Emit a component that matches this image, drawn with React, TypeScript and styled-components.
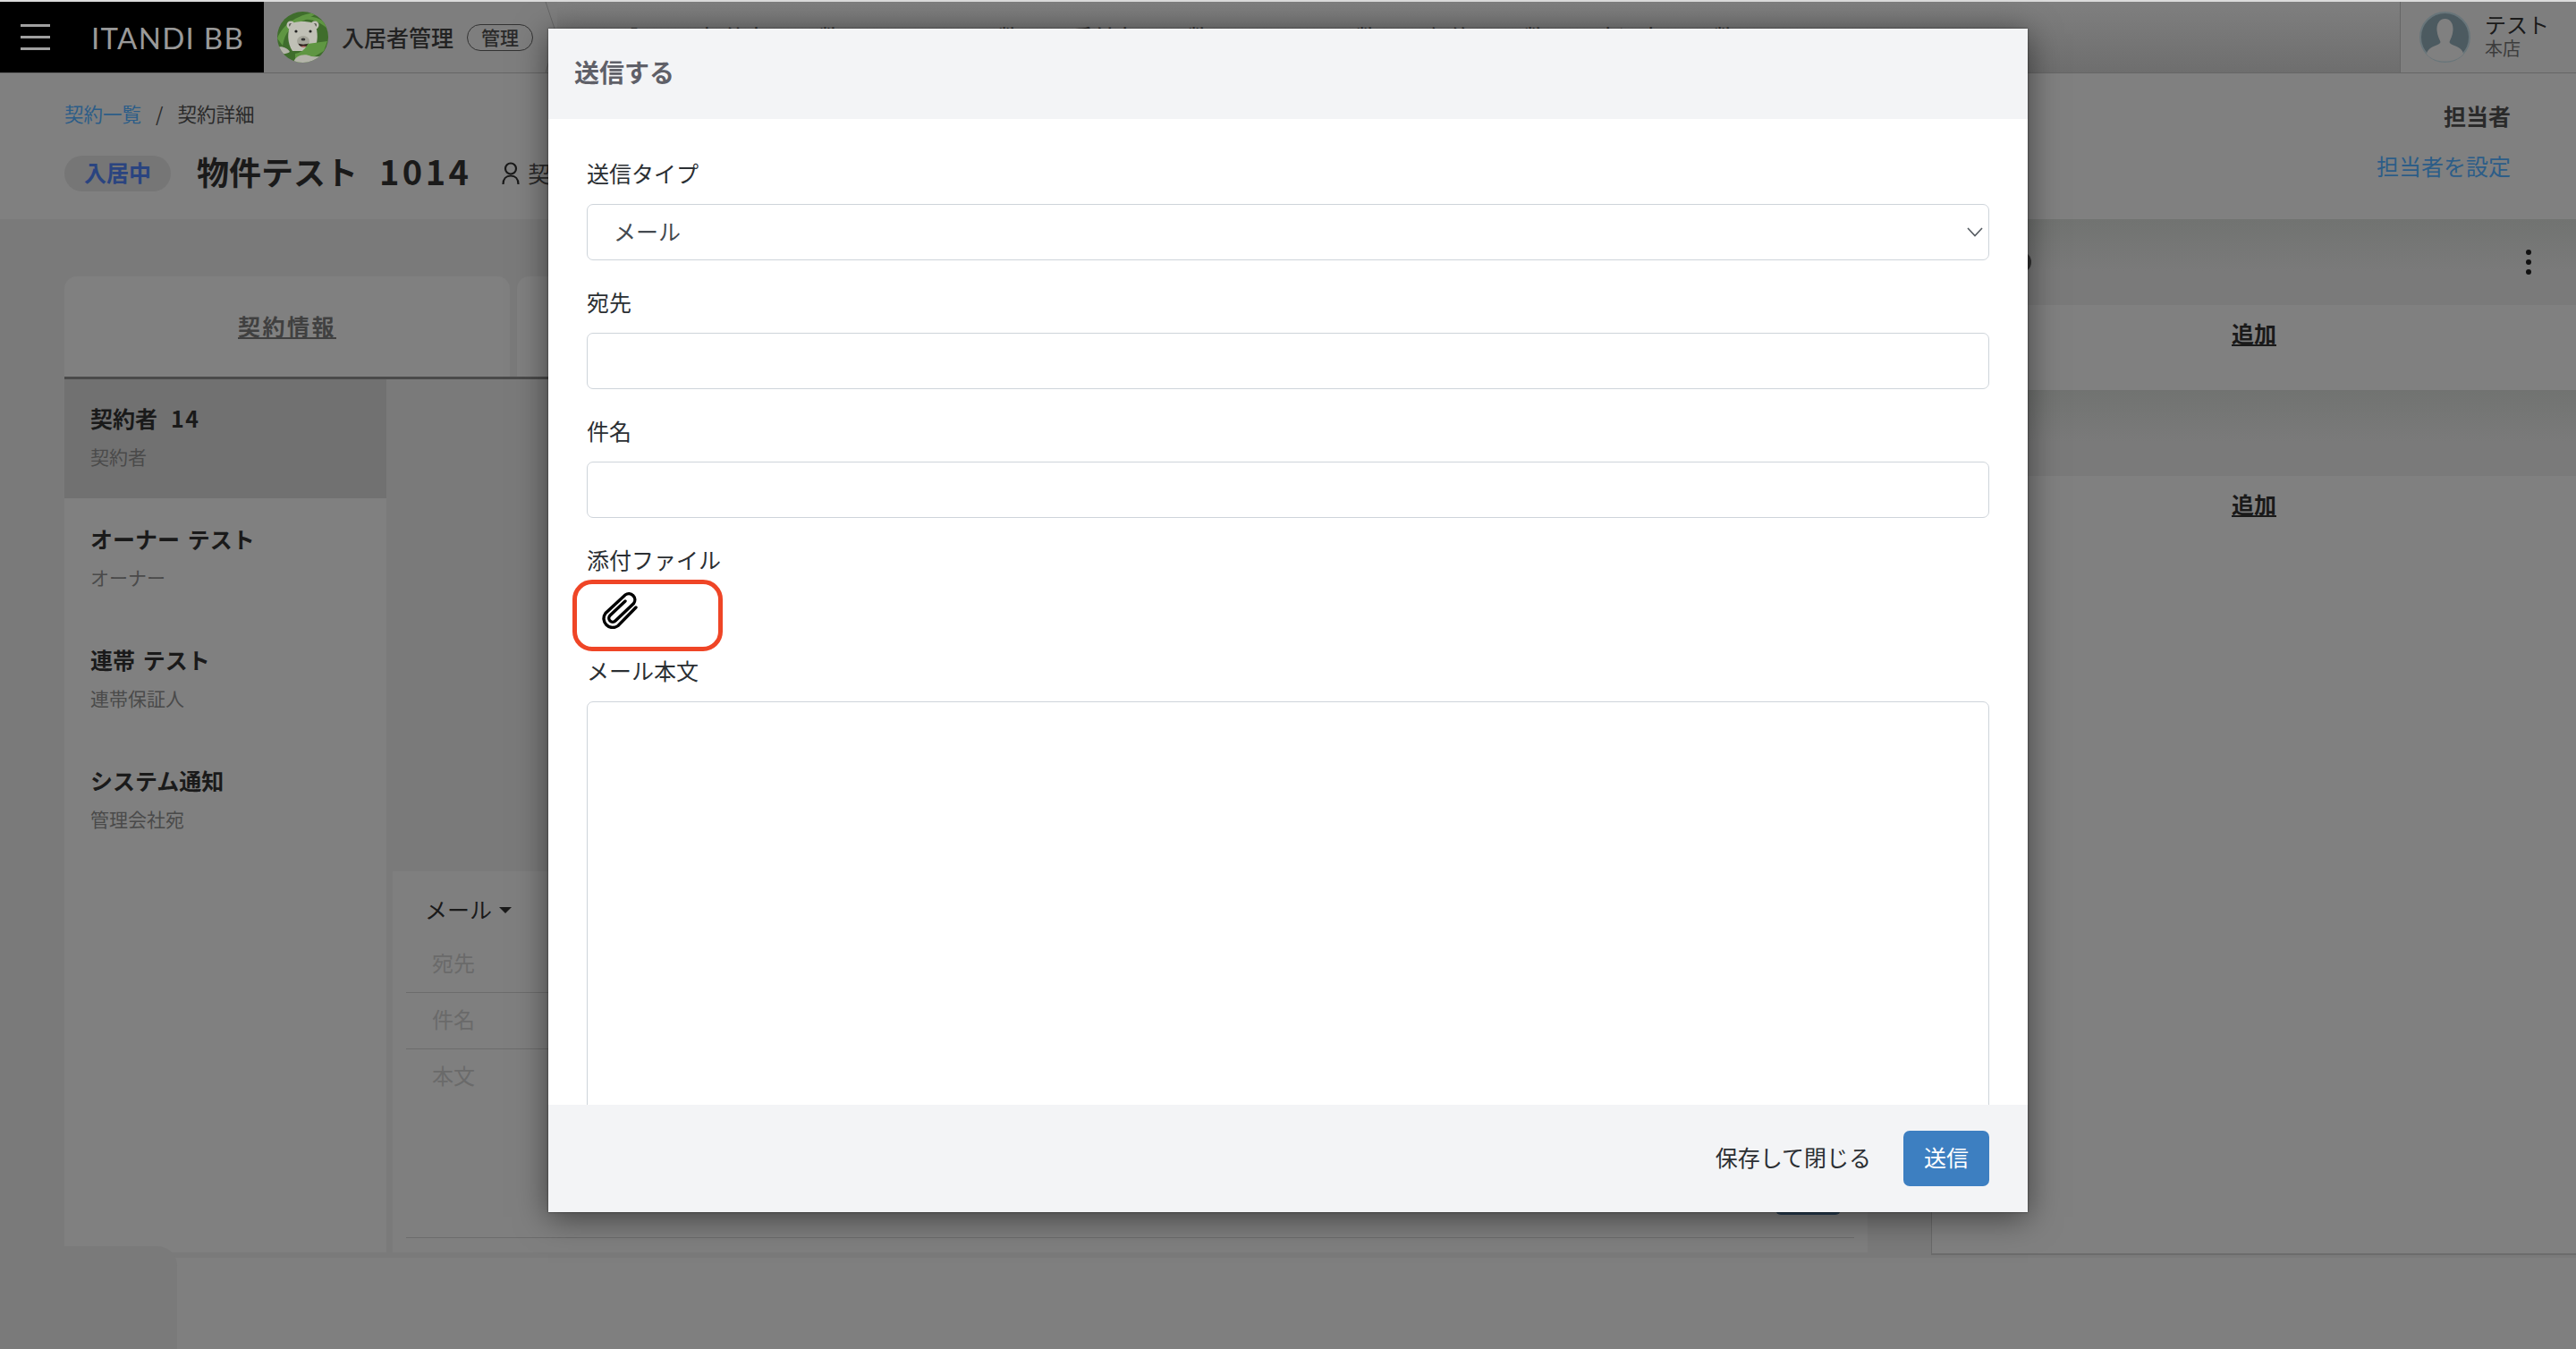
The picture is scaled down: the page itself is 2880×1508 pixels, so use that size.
import React from "react";
import styled, { createGlobalStyle } from "styled-components";

const GlobalStyle = createGlobalStyle`
    html, body {
        margin: 0;
        padding: 0;
        background: #808080;
    }
    * {
        box-sizing: border-box;
    }
    body {
        font-family: "Noto Sans CJK JP", "Noto Sans", sans-serif;
        color: #1a1a1a;
    }
`;

const BearLogo = () => (
    <svg width="57" height="57" viewBox="0 0 57 57">
        <defs>
            <clipPath id="bear-clip">
                <circle cx="28.5" cy="28.5" r="28.5" />
            </clipPath>
        </defs>
        <g clipPath="url(#bear-clip)">
            <rect width="57" height="57" fill="#3f6d2c" />
            <path d="M0 30 C6 14 24 2 48 0 L30 10 C16 14 8 24 6 38 Z" fill="#5f9642" />
            <path d="M30 6 C40 4 50 8 57 16 L57 20 C48 12 40 8 30 9 Z" fill="#5f9642" />
            <circle cx="15" cy="15" r="4.5" fill="#c0c0b6" />
            <circle cx="42" cy="15" r="4.5" fill="#c0c0b6" />
            <circle cx="15" cy="15" r="2" fill="#55554e" />
            <circle cx="42" cy="15" r="2" fill="#55554e" />
            <path d="M15 14 C20 10 37 10 42 14 C46 22 46 36 40 44 L17 44 C11 36 11 22 15 14 Z" fill="#c0c0b6" />
            <circle cx="21" cy="22" r="1.6" fill="#222" />
            <circle cx="37" cy="22" r="1.6" fill="#222" />
            <ellipse cx="29" cy="33" rx="7" ry="6" fill="#a5a59a" />
            <ellipse cx="29" cy="31" rx="2.4" ry="1.6" fill="#333" />
            <path d="M23.5 35.5 C26 37 32 37 35 35.5 C34.5 41 24.5 41 23.5 35.5 Z" fill="#2a1d1a" />
            <path d="M26 39 C28 38 31 38 33 39 C31 40.5 28 40.5 26 39 Z" fill="#b5766c" />
            <path d="M34 36 L56 33 L52 44 L30 57 L20 57 L20 47 C26 46 32 42 34 36 Z" fill="#5f9642" />
            <path d="M0 40 C5 38 12 41 14 45 C10 48 5 47 2 48 Z" fill="#b4b4aa" />
            <path d="M18 57 C20 49 30 46 38 50 C42 50 46 51 50 49 L46 57 Z" fill="#b4b4aa" />
        </g>
    </svg>
);

const UserAvatar = () => (
    <svg width="57" height="57" viewBox="0 0 57 57">
        <circle cx="28.5" cy="28.5" r="27.5" fill="#4c5a60" stroke="#68757a" strokeWidth="2" />
        <path
            d="M28.5 8 C35 8 38 14 37.5 21 C37 27 34.5 31 33.5 34 C34 37 41 38 45 41 C48 43 49 46 49 47.5 C44 53 37 55.5 28.5 55.5 C20 55.5 13 53 8 47.5 C8 46 9 43 12 41 C16 38 23 37 23.5 34 C22.5 31 20 27 19.5 21 C19 14 22 8 28.5 8 Z"
            fill="#808080"
        />
    </svg>
);

const PersonIcon = () => (
    <svg width="20" height="26" viewBox="0 0 20 26" fill="none" stroke="#1a1a1a" strokeWidth="2.2">
        <circle cx="10" cy="7.5" r="6" />
        <path d="M1.5 25 C1.5 19 5 15.5 10 15.5 C15 15.5 18.5 19 18.5 25" />
    </svg>
);

const PaperClip = () => (
    <svg width="40" height="42" viewBox="0 0 40 42" fill="none" stroke="#000" strokeWidth="3.4" strokeLinecap="round">
        <path d="M38 18 L18 38.5 A10 10 0 0 1 4 24.5 L26 4 A6.8 6.8 0 0 1 35.5 13.5 L15 33 A4.2 4.2 0 0 1 9 27 L26 11" />
    </svg>
);

const SelectChevron = () => (
    <svg width="18" height="11" viewBox="0 0 18 11" fill="none" stroke="#555b61" strokeWidth="1.6">
        <polyline points="1,1 9,9.5 17,1" />
    </svg>
);

const MENU_ITEMS = ["MSA証", "招待中", "数", "FOSS", "数", "受付中", "数", "入居", "数", "解約", "数", "申込中", "数"];

const CUSTOMERS = [
    { name: "契約者", no: "14", role: "契約者", selected: true },
    { name: "オーナー テスト", role: "オーナー", selected: false },
    { name: "連帯 テスト", role: "連帯保証人", selected: false },
    { name: "システム通知", role: "管理会社宛", selected: false },
];

export default function App() {
    return (
        <Page>
            <GlobalStyle />
            <TopStrip />
            <GlobalHeader>
                <Brand>
                    <Hamburger>
                        <span />
                        <span />
                        <span />
                    </Hamburger>
                    <BrandName>ITANDI BB</BrandName>
                </Brand>
                <AppTitle>
                    <BearLogo />
                    <AppName>入居者管理</AppName>
                    <RoleBadge>管理</RoleBadge>
                </AppTitle>
                <Slant width="14" height="80" viewBox="0 0 14 80">
                    <polyline points="1,0 13,36 1,80" />
                </Slant>
                <HeaderNav>
                    {MENU_ITEMS.map((item, i) => (
                        <span key={i}>{item}</span>
                    ))}
                </HeaderNav>
                <UserBlock>
                    <UserAvatar />
                    <div>
                        <UserName>テスト</UserName>
                        <UserShop>本店</UserShop>
                    </div>
                </UserBlock>
            </GlobalHeader>

            <TitleBar>
                <div>
                    <Breadcrumb>
                        <a>契約一覧</a>
                        <i>/</i>
                        <span>契約詳細</span>
                    </Breadcrumb>
                    <TitleRow>
                        <StatusPill>入居中</StatusPill>
                        <PropertyName>
                            物件テスト<b>1014</b>
                        </PropertyName>
                        <ContractPerson>
                            <PersonIcon />
                            <span>契</span>
                        </ContractPerson>
                    </TitleRow>
                </div>
                <AssigneeBox>
                    <strong>担当者</strong>
                    <a>担当者を設定</a>
                </AssigneeBox>
            </TitleBar>

            <ContentRow>
                <Workspace>
                    <Tabs>
                        <Tab>契約情報</Tab>
                        <Tab />
                    </Tabs>
                    <Split>
                        <Sidebar>
                            {CUSTOMERS.map((c) => (
                                <CustomerItem key={c.name} selected={c.selected}>
                                    <CustomerName>
                                        {c.name}
                                        {c.no && <CustomerNo>{c.no}</CustomerNo>}
                                    </CustomerName>
                                    <CustomerRole>{c.role}</CustomerRole>
                                </CustomerItem>
                            ))}
                        </Sidebar>
                        <ThreadColumn>
                            <Composer>
                                <ComposerType>
                                    メール
                                    <Caret />
                                </ComposerType>
                                <ComposerRow>宛先</ComposerRow>
                                <ComposerRow>件名</ComposerRow>
                                <ComposerRow grow>本文</ComposerRow>
                                <ComposerSend />
                            </Composer>
                        </ThreadColumn>
                    </Split>
                </Workspace>
                <RightPanel>
                    <PanelHeader>
                        <PanelDot />
                        <MoreDots>
                            <span />
                            <span />
                            <span />
                        </MoreDots>
                    </PanelHeader>
                    <PanelRow>
                        <AddLink>追加</AddLink>
                    </PanelRow>
                    <PanelHeader />
                    <PanelRow>
                        <AddLink>追加</AddLink>
                    </PanelRow>
                </RightPanel>
            </ContentRow>
            <PageFoot>
                <FootTab />
            </PageFoot>

            <Modal>
                <ModalHeader>送信する</ModalHeader>
                <ModalBody>
                    <Field>
                        <FieldLabel>送信タイプ</FieldLabel>
                        <SelectBox>
                            <span>メール</span>
                            <SelectChevron />
                        </SelectBox>
                    </Field>
                    <Field>
                        <FieldLabel>宛先</FieldLabel>
                        <TextInput readOnly />
                    </Field>
                    <Field>
                        <FieldLabel>件名</FieldLabel>
                        <TextInput readOnly />
                    </Field>
                    <FieldLabel tight>添付ファイル</FieldLabel>
                    <AttachRow>
                        <PaperClip />
                        <Highlight />
                    </AttachRow>
                    <FieldLabel>メール本文</FieldLabel>
                    <BodyArea readOnly />
                </ModalBody>
                <ModalFooter>
                    <SaveClose>保存して閉じる</SaveClose>
                    <SendButton>送信</SendButton>
                </ModalFooter>
            </Modal>
        </Page>
    );
}

const Page = styled.div`
    position: relative;
    display: flex;
    flex-direction: column;
    width: 2880px;
    height: 1508px;
    overflow: hidden;
    background: #808080;
`;

const TopStrip = styled.div`
    flex: none;
    height: 2px;
    background: #dcdcdc;
`;

const GlobalHeader = styled.header`
    flex: none;
    display: flex;
    height: 80px;
    border-bottom: 1px solid #666;
    background: #7e7e7e;
`;

const Brand = styled.div`
    flex: none;
    display: flex;
    align-items: center;
    width: 295px;
    padding-left: 23px;
    background: #000;
`;

const Hamburger = styled.div`
    display: flex;
    flex-direction: column;
    gap: 10px;
    width: 33px;

    span {
        height: 3px;
        background: #a0a0a0;
    }
`;

const BrandName = styled.div`
    margin-left: 46px;
    font-family: "Lato", sans-serif;
    font-size: 33px;
    font-weight: 400;
    letter-spacing: 1.3px;
    white-space: nowrap;
    color: #999;
`;

const AppTitle = styled.div`
    flex: none;
    display: flex;
    align-items: center;
    padding-left: 15px;
`;

const AppName = styled.div`
    margin-left: 15px;
    padding-bottom: 2px;
    font-size: 25px;
    font-weight: 500;
    color: #222;
`;

const RoleBadge = styled.div`
    display: flex;
    align-items: center;
    justify-content: center;
    width: 74px;
    height: 30px;
    margin-left: 15px;
    padding-bottom: 2px;
    border: 1px solid #333;
    border-radius: 15px;
    font-size: 21px;
    font-weight: 500;
    color: #2a2a2a;
`;

const Slant = styled.svg`
    flex: none;
    margin-left: 13px;
    fill: none;
    stroke: #666;
    stroke-width: 1;
`;

const HeaderNav = styled.nav`
    flex: 1;
    display: flex;
    gap: 58px;
    padding: 21px 0 0 31px;
    font-size: 24px;
    line-height: 36px;
    font-weight: 500;
    white-space: nowrap;
    overflow: hidden;
    background: linear-gradient(#7f7f7f, #6e6e6e);
`;

const UserBlock = styled.div`
    flex: none;
    display: flex;
    align-items: center;
    gap: 16px;
    width: 197px;
    padding-left: 21px;
    border-left: 1px solid #666;
`;

const UserName = styled.div`
    margin-top: -5px;
    font-size: 24px;
    line-height: 30px;
    color: #1a1a1a;
`;

const UserShop = styled.div`
    font-size: 20px;
    line-height: 24px;
    color: #3c3c3c;
`;

const TitleBar = styled.section`
    flex: none;
    display: flex;
    justify-content: space-between;
    height: 163px;
    padding: 29px 73px 0 72px;
    background: #808080;
`;

const Breadcrumb = styled.div`
    display: flex;
    align-items: center;
    gap: 16px;
    height: 30px;
    font-size: 21.5px;
    color: #2a2a2a;

    a {
        color: #2c5d88;
    }
    i {
        font-style: normal;
    }
`;

const TitleRow = styled.div`
    display: flex;
    align-items: center;
    height: 40px;
    margin-top: 33px;
`;

const StatusPill = styled.div`
    display: flex;
    align-items: center;
    justify-content: center;
    width: 119px;
    height: 40px;
    padding-bottom: 4px;
    border-radius: 20px;
    background: #767676;
    font-size: 25px;
    font-weight: 700;
    color: #2a4480;
`;

const PropertyName = styled.h1`
    margin: -6px 0 0 29px;
    font-size: 36px;
    line-height: 48px;
    font-weight: 700;
    color: #1a1a1a;

    b {
        margin-left: 24px;
        font-size: 38px;
        font-weight: 700;
        letter-spacing: 3.4px;
    }
`;

const ContractPerson = styled.div`
    display: flex;
    align-items: center;
    gap: 9px;
    margin-left: 34px;
    font-size: 25px;
    color: #2a2a2a;
    white-space: nowrap;

    span {
        padding-bottom: 3px;
    }
`;

const AssigneeBox = styled.div`
    display: flex;
    flex-direction: column;
    align-items: flex-end;
    margin-top: -1px;
    font-size: 25px;
    line-height: 38px;

    strong {
        font-weight: 700;
        color: #2a2a2a;
    }
    a {
        margin-top: 18px;
        color: #2c5d88;
    }
`;

const ContentRow = styled.div`
    flex: none;
    display: flex;
    height: 1161px;
    background: #7a7a7a;
`;

const Workspace = styled.div`
    flex: none;
    display: flex;
    flex-direction: column;
    width: 2159px;
    padding: 64px 71px 6px 72px;
`;

const Tabs = styled.div`
    flex: none;
    display: flex;
    gap: 8px;
    border-bottom: 3px solid #4a4a4a;
`;

const Tab = styled.div`
    display: flex;
    align-items: center;
    justify-content: center;
    width: 498px;
    height: 112px;
    padding-bottom: 3px;
    border-radius: 14px 14px 0 0;
    background: #808080;
    font-size: 25px;
    font-weight: 700;
    letter-spacing: 2.5px;
    text-decoration: underline;
    color: #404040;
`;

const Split = styled.div`
    flex: 1;
    display: flex;
    gap: 7px;
    min-height: 0;
`;

const Sidebar = styled.aside`
    flex: none;
    display: flex;
    flex-direction: column;
    gap: 2px;
    width: 360px;
    background: #808080;
`;

const CustomerItem = styled.div<{ selected: boolean }>`
    height: 133px;
    padding: 25px 0 0 29px;
    background: ${(p) => (p.selected ? "#717171" : "transparent")};
`;

const CustomerName = styled.div`
    font-size: 25px;
    line-height: 36px;
    font-weight: 700;
    word-spacing: 3px;
    color: #1a1a1a;
`;

const CustomerNo = styled.span`
    margin-left: 15px;
    letter-spacing: 1.5px;
`;

const CustomerRole = styled.div`
    margin-top: 10px;
    font-size: 21px;
    line-height: 30px;
    color: #4a4a4a;
`;

const ThreadColumn = styled.div`
    flex: 1;
    display: flex;
    flex-direction: column;
    justify-content: flex-end;
`;

const Composer = styled.div`
    position: relative;
    display: flex;
    flex-direction: column;
    height: 426px;
    padding: 0 15px 16px;
    background: #7f7f7f;
`;

const ComposerType = styled.div`
    flex: none;
    display: flex;
    align-items: center;
    height: 73px;
    padding: 10px 0 0 21px;
    font-size: 25px;
    color: #1a1a1a;
`;

const Caret = styled.span`
    width: 0;
    height: 0;
    margin: 4px 0 0 8px;
    border-left: 7px solid transparent;
    border-right: 7px solid transparent;
    border-top: 7px solid #1a1a1a;
`;

const ComposerRow = styled.div<{ grow?: boolean }>`
    ${(p) => (p.grow ? "flex: 1;" : "flex: none; height: 63px;")}
    padding: 10px 0 0 29px;
    border-bottom: 1px solid #6c6c6c;
    font-size: 24px;
    line-height: 38px;
    color: #6a6a6a;
`;

const ComposerSend = styled.div`
    position: absolute;
    right: 30px;
    bottom: 42px;
    width: 73px;
    height: 60px;
    border-radius: 6px;
    background: #2a4055;
`;

const RightPanel = styled.aside`
    flex: none;
    display: flex;
    flex-direction: column;
    width: 721px;
    height: 1158px;
    border-left: 1px solid #6a6a6a;
    border-bottom: 2px solid #6c6c6c;
    background: #808080;
`;

const PanelHeader = styled.div`
    flex: none;
    display: flex;
    align-items: center;
    justify-content: space-between;
    height: 95.5px;
    padding: 0 50px 0 87px;
    background: linear-gradient(#717371, #7a7a7a 60%);
`;

const PanelDot = styled.span`
    width: 24px;
    height: 24px;
    border-radius: 50%;
    background: #333;
`;

const MoreDots = styled.div`
    display: flex;
    flex-direction: column;
    gap: 5px;

    span {
        width: 6px;
        height: 6px;
        border-radius: 50%;
        background: #111;
    }
`;

const PanelRow = styled.div`
    flex: none;
    display: flex;
    justify-content: center;
    height: 95.5px;
    padding-top: 12px;
`;

const AddLink = styled.a`
    font-size: 25px;
    line-height: 38px;
    font-weight: 700;
    text-decoration: underline;
    color: #1a1a1a;
`;

const PageFoot = styled.div`
    flex: 1;
    position: relative;
    background: #7f7f7f;
`;

const FootTab = styled.div`
    position: absolute;
    left: 0;
    bottom: 0;
    width: 198px;
    height: 115px;
    border-radius: 0 22px 0 0;
    background: #7a7a7a;
`;

const Modal = styled.div`
    position: absolute;
    left: 613px;
    top: 32px;
    display: flex;
    flex-direction: column;
    width: 1654px;
    height: 1323px;
    background: #fff;
    box-shadow: 0 0 2px rgba(0, 0, 0, 0.6), 0 6px 34px rgba(0, 0, 0, 0.5);
`;

const ModalHeader = styled.div`
    flex: none;
    display: flex;
    align-items: center;
    height: 101px;
    padding: 0 0 5px 29px;
    background: #f3f4f6;
    font-size: 28px;
    font-weight: 700;
    color: #5f6068;
`;

const ModalBody = styled.div`
    flex: 1;
    min-height: 0;
    padding: 41px 43px 0 43px;
    overflow: hidden;
`;

const Field = styled.div`
    height: 144px;
`;

const FieldLabel = styled.div<{ tight?: boolean }>`
    height: 38px;
    margin-bottom: ${(p) => (p.tight ? 0 : 16)}px;
    font-size: 25px;
    line-height: 38px;
    color: #2b2f33;
`;

const SelectBox = styled.div`
    display: flex;
    align-items: center;
    justify-content: space-between;
    height: 63px;
    padding: 0 6px 0 29px;
    border: 1px solid #ced4da;
    border-radius: 7px;
    font-size: 25px;
    color: #444a50;

    span {
        padding-bottom: 3px;
    }
`;

const TextInput = styled.input`
    display: block;
    width: 100%;
    height: 63px;
    border: 1px solid #ced4da;
    border-radius: 7px;
    outline: none;
`;

const AttachRow = styled.div`
    position: relative;
    height: 86px;
    padding: 17px 0 0 17px;
`;

const Highlight = styled.div`
    position: absolute;
    left: -16px;
    top: 4px;
    width: 168px;
    height: 80px;
    border: 5px solid #ef4526;
    border-radius: 22px;
`;

const BodyArea = styled.textarea`
    display: block;
    width: 100%;
    height: 700px;
    border: 1px solid #ced4da;
    border-radius: 7px;
    outline: none;
    resize: none;
`;

const ModalFooter = styled.div`
    flex: none;
    display: flex;
    align-items: center;
    justify-content: flex-end;
    gap: 36px;
    height: 120px;
    padding-right: 43px;
    background: #f3f4f6;
`;

const SaveClose = styled.div`
    padding-bottom: 5px;
    font-size: 25px;
    color: #2b2f33;
`;

const SendButton = styled.button`
    width: 96px;
    height: 62px;
    padding: 0 0 5px;
    border: none;
    border-radius: 7px;
    background: #3d7fc1;
    font-family: inherit;
    font-size: 25px;
    color: #fff;
`;
